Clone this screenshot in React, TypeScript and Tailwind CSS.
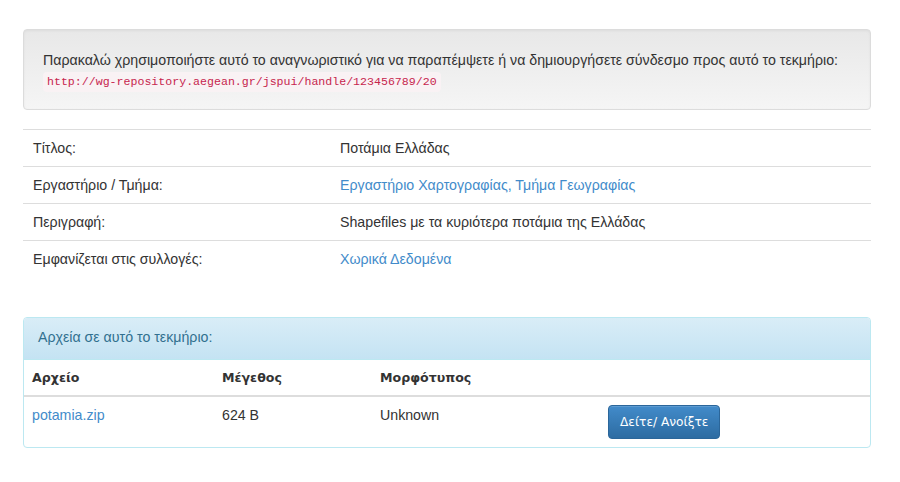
import React from 'react';

const rows = [
  { label: 'Τίτλος:', value: 'Ποτάμια Ελλάδας', link: false },
  { label: 'Εργαστήριο / Τμήμα:', value: 'Εργαστήριο Χαρτογραφίας, Τμήμα Γεωγραφίας', link: true },
  { label: 'Περιγραφή:', value: 'Shapefiles με τα κυριότερα ποτάμια της Ελλάδας', link: false },
  { label: 'Εμφανίζεται στις συλλογές:', value: 'Χωρικά Δεδομένα', link: true },
];

export default function App() {
  return (
    <div className="min-h-[482px] bg-white text-[14.2px] leading-[20px] text-[#333] font-['Liberation_Sans',Arial,sans-serif]">
      <div className="ml-[23px] w-[848px] pt-[29px]">
        {/* Handle well */}
        <div className="rounded border border-[#dcdcdc] bg-gradient-to-b from-[#e8e8e8] to-[#f5f5f5] px-[19px] pt-[20px] pb-[17px] shadow-[inset_0_1px_3px_rgba(0,0,0,0.05)]">
          <div>Παρακαλώ χρησιμοποιήστε αυτό το αναγνωριστικό για να παραπέμψετε ή να δημιουργήσετε σύνδεσμο προς αυτό το τεκμήριο:</div>
          <code className="inline-block rounded px-[4px] py-[1px] bg-[#f9f2f4] text-[#c7254e] text-[11.6px] leading-[18px] font-['Liberation_Mono',monospace]">
            http://wg-repository.aegean.gr/jspui/handle/123456789/20
          </code>
        </div>

        {/* Metadata table */}
        <table className="mt-[19px] w-full border-collapse">
          <tbody>
            {rows.map((r) => (
              <tr key={r.label} className="border-t border-[#ddd]">
                <td className="w-[307px] pl-[10px] pr-2 py-2 align-top">{r.label}</td>
                <td className="pl-[10px] pr-2 py-2 align-top">
                  {r.link ? <a className="text-[#428bca]">{r.value}</a> : r.value}
                </td>
              </tr>
            ))}
          </tbody>
        </table>

        {/* Files panel */}
        <div className="mt-[40px] rounded border border-[#bce8f1] overflow-hidden">
          <div className="px-[14px] pt-[9px] pb-[12px] border-b border-[#bce8f1] bg-gradient-to-b from-[#d9edf7] to-[#c4e3f3] text-[#31708f]">
            Αρχεία σε αυτό το τεκμήριο:
          </div>
          <table className="w-full border-collapse">
            <thead>
              <tr className="border-b-2 border-[#ddd]">
                <th className="w-[190px] px-2 pt-[8px] pb-[7px] text-left font-bold text-[12.6px] font-['DejaVu_Sans',sans-serif]">Αρχείο</th>
                <th className="w-[158px] px-2 pt-[8px] pb-[7px] text-left font-bold text-[12.6px] font-['DejaVu_Sans',sans-serif]">Μέγεθος</th>
                <th className="w-[228px] px-2 pt-[8px] pb-[7px] text-left font-bold text-[12.6px] font-['DejaVu_Sans',sans-serif]">Μορφότυπος</th>
                <th className="p-2"></th>
              </tr>
            </thead>
            <tbody>
              <tr>
                <td className="p-2 align-top"><a className="text-[#428bca]">potamia.zip</a></td>
                <td className="p-2 align-top">624 B</td>
                <td className="p-2 align-top">Unknown</td>
                <td className="p-2 align-top">
                  <button className="h-[34px] rounded border border-[#2b669a] bg-gradient-to-b from-[#428bca] to-[#2d6ca2] px-[11px] text-white text-[12.2px] font-['DejaVu_Sans',sans-serif] shadow-[inset_0_1px_0_rgba(255,255,255,0.15)]">
                    Δείτε/ Ανοίξτε
                  </button>
                </td>
              </tr>
            </tbody>
          </table>
        </div>
      </div>
    </div>
  );
}
